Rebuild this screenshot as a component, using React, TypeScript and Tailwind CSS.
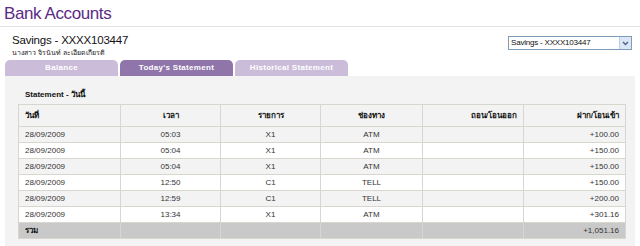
const rows = [
  { date: "28/09/2009", time: "05:03", code: "X1", channel: "ATM", out: "", inAmt: "+100.00" },
  { date: "28/09/2009", time: "05:04", code: "X1", channel: "ATM", out: "", inAmt: "+150.00" },
  { date: "28/09/2009", time: "05:04", code: "X1", channel: "ATM", out: "", inAmt: "+150.00" },
  { date: "28/09/2009", time: "12:50", code: "C1", channel: "TELL", out: "", inAmt: "+150.00" },
  { date: "28/09/2009", time: "12:59", code: "C1", channel: "TELL", out: "", inAmt: "+200.00" },
  { date: "28/09/2009", time: "13:34", code: "X1", channel: "ATM", out: "", inAmt: "+301.16" },
];

const cell = "border border-[#d9d6cf] h-[16px] px-[6px] py-0";

export default function App() {
  return (
    <div className="w-[640px] h-[246px] bg-white overflow-hidden font-['Liberation_Sans',Arial,sans-serif]">
      {/* Title */}
      <div className="px-[4px] pt-[3px] h-[27px] border-b border-[#e3e3e3]">
        <h1 className="text-[17px] leading-[22px] tracking-[-0.4px] text-[#5b2a86]">Bank Accounts</h1>
      </div>

      {/* Account header */}
      <div className="flex justify-between items-start pl-[12px] pr-[8px] pt-[7px] h-[33px]">
        <div>
          <div className="text-[11.5px] leading-[13px] text-[#111] tracking-[-0.2px]">Savings - XXXX103447</div>
          <div className="text-[7px] leading-[9px] text-[#222] mt-[1px]">นางสาว จิรนันท์ ละเอียดเกียรติ</div>
        </div>
        <div className="w-[124px] h-[14px] mt-[2px] border border-[#7f9db9] bg-white flex items-center justify-between">
          <span className="text-[8px] leading-[12px] pl-[2px] text-[#111] tracking-[-0.2px]">Savings - XXXX103447</span>
          <span className="w-[12px] h-[12px] bg-[#dbe6f7] border-l border-[#b9cdea] flex items-center justify-center">
            <svg width="7" height="5" viewBox="0 0 7 5">
              <path d="M1 1 L3.5 3.5 L6 1" fill="none" stroke="#4d6185" strokeWidth="1.4" />
            </svg>
          </span>
        </div>
      </div>

      {/* Tabs */}
      <div className="flex gap-[2px] pl-[5px] h-[16px]">
        <div className="w-[113px] rounded-t-[5px] bg-[#cbbcd9] text-white text-[8px] font-bold tracking-[0.3px] flex items-center justify-center">Balance</div>
        <div className="w-[113px] rounded-t-[5px] bg-[#8f75a9] text-white text-[8px] font-bold tracking-[0.3px] flex items-center justify-center">Today's Statement</div>
        <div className="w-[113px] rounded-t-[5px] bg-[#cbbcd9] text-white text-[8px] font-bold tracking-[0.3px] flex items-center justify-center">Historical Statement</div>
      </div>

      {/* Panel */}
      <div className="ml-[5px] w-[630px] h-[170px] bg-[#f3f3f3] pl-[13px] pr-[10px] pt-[14px]">
        <div className="pl-[7px] h-[14px] text-[8px] font-bold text-[#111] leading-[10px]">Statement - วันนี้</div>
        <table className="w-[607px] border-collapse table-fixed text-[8px] text-[#333]">
          <colgroup>
            <col className="w-[102px]" />
            <col className="w-[100px]" />
            <col className="w-[100px]" />
            <col className="w-[102px]" />
            <col className="w-[101px]" />
            <col className="w-[102px]" />
          </colgroup>
          <thead>
            <tr className="bg-[#f3f3f3] text-[#111] font-bold">
              <th className={`${cell} h-[22px] text-left`}>วันที่</th>
              <th className={`${cell} h-[22px] text-center`}>เวลา</th>
              <th className={`${cell} h-[22px] text-center`}>รายการ</th>
              <th className={`${cell} h-[22px] text-center`}>ช่องทาง</th>
              <th className={`${cell} h-[22px] text-right`}>ถอน/โอนออก</th>
              <th className={`${cell} h-[22px] text-right`}>ฝาก/โอนเข้า</th>
            </tr>
          </thead>
          <tbody>
            {rows.map((r, i) => (
              <tr key={i} className={i % 2 === 0 ? "bg-[#f3f3f3]" : "bg-white"}>
                <td className={`${cell} text-left`}>{r.date}</td>
                <td className={`${cell} text-center`}>{r.time}</td>
                <td className={`${cell} text-center`}>{r.code}</td>
                <td className={`${cell} text-center`}>{r.channel}</td>
                <td className={`${cell} text-right`}>{r.out}</td>
                <td className={`${cell} text-right`}>{r.inAmt}</td>
              </tr>
            ))}
            <tr className="bg-[#c9c9c9]">
              <td className={`${cell} text-left font-bold text-[#111] border-[#c9c9c9]`}>รวม</td>
              <td className={`${cell} border-[#c9c9c9]`}></td>
              <td className={`${cell} border-[#c9c9c9]`}></td>
              <td className={`${cell} border-[#c9c9c9] border-r-[#d9d6cf]`}></td>
              <td className={`${cell} border-[#c9c9c9] border-r-[#d9d6cf]`}></td>
              <td className={`${cell} text-right border-[#c9c9c9]`}>+1,051.16</td>
            </tr>
          </tbody>
        </table>
      </div>
    </div>
  );
}
